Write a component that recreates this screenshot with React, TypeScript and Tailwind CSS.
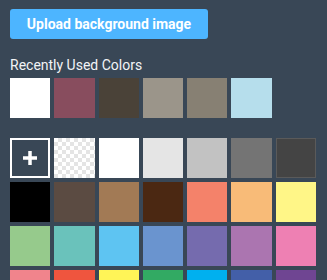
const recentColors = ['#ffffff', '#884d5e', '#4a4238', '#9b958a', '#878073', '#b6deec'];

const paletteColors = [
  '#ffffff', '#e5e5e5', '#c2c2c2', '#747474', '#444444',
  '#000000', '#5b4b42', '#a27a55', '#4b2812', '#f4826a', '#f8bb78', '#fff687',
  '#96ca8c', '#6ac2bb', '#5ec4f2', '#6a94cf', '#756bae', '#ab75b0', '#ee80b3',
  '#f1848c', '#ef553e', '#fff457', '#32aa63', '#00b0ef', '#435fa8', '#6f4592',
];

export default function App() {
  return (
    <div className="h-[280px] w-[327px] overflow-hidden bg-[#394756] px-[10px] pt-[9px] font-['Roboto',sans-serif]">
      <button
        type="button"
        className="h-[30px] w-[198px] rounded-[3px] bg-[#4db5ff] text-[14px] font-bold text-white"
      >
        Upload background image
      </button>

      <h3 className="mt-[16px] text-[14px] leading-[20px] text-[#f2f4f6]">Recently Used Colors</h3>
      <div className="mt-[3px] grid w-[306px] grid-cols-7 gap-[4px]">
        {recentColors.map((c, i) => (
          <div key={i} className="h-[40px]" style={{ backgroundColor: c }} />
        ))}
      </div>

      <div className="mt-[20px] grid w-[306px] grid-cols-7 gap-[4px]">
        <button
          type="button"
          className="flex h-[40px] items-center justify-center border-2 border-white"
        >
          <svg width="14" height="14" viewBox="0 0 14 14">
            <path d="M7 0v14M0 7h14" stroke="#ffffff" strokeWidth="3.5" />
          </svg>
        </button>
        <div className="h-[40px] bg-white bg-[conic-gradient(#e4e4e4_25%,#ffffff_0_50%,#e4e4e4_0_75%,#ffffff_0)] bg-[length:8px_8px]" />
        {paletteColors.map((c, i) => (
          <div
            key={i}
            className={i === 4 ? 'h-[40px] border border-[#5a5a5a]' : 'h-[40px]'}
            style={{ backgroundColor: c }}
          />
        ))}
      </div>
    </div>
  );
}
